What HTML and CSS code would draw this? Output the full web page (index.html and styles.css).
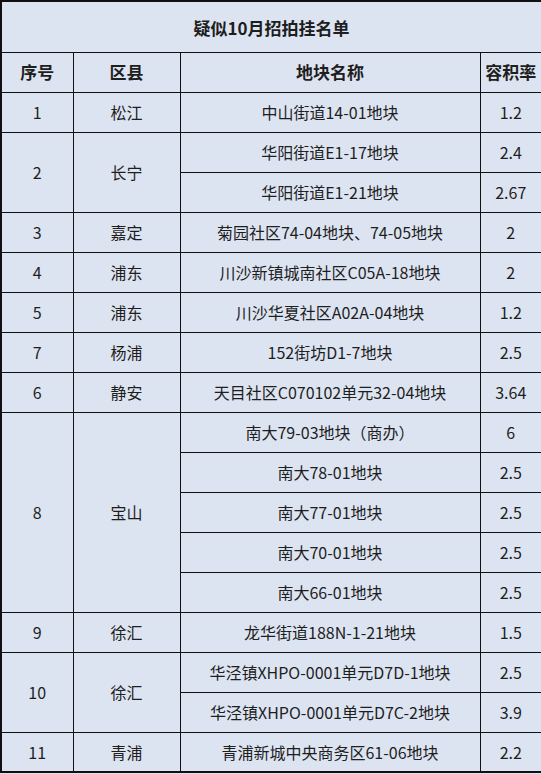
FILE: index.html
```html
<!DOCTYPE html>
<html lang="zh-CN">
<head>
<meta charset="utf-8">
<title>疑似10月招拍挂名单</title>
<link rel="stylesheet" href="styles.css">
</head>
<body>
<table class="sheet">
  <colgroup>
    <col class="c-no">
    <col class="c-area">
    <col class="c-name">
    <col class="c-far">
  </colgroup>
  <thead>
    <tr class="title-row"><th colspan="4" class="title">疑似10月招拍挂名单</th></tr>
    <tr class="head-row"><th>序号</th><th>区县</th><th>地块名称</th><th>容积率</th></tr>
  </thead>
  <tbody>
    <tr><td>1</td><td>松江</td><td>中山街道14-01地块</td><td>1.2</td></tr>
    <tr><td rowspan="2">2</td><td rowspan="2">长宁</td><td>华阳街道E1-17地块</td><td>2.4</td></tr>
    <tr><td>华阳街道E1-21地块</td><td>2.67</td></tr>
    <tr><td>3</td><td>嘉定</td><td>菊园社区74-04地块、74-05地块</td><td>2</td></tr>
    <tr><td>4</td><td>浦东</td><td>川沙新镇城南社区C05A-18地块</td><td>2</td></tr>
    <tr><td>5</td><td>浦东</td><td>川沙华夏社区A02A-04地块</td><td>1.2</td></tr>
    <tr><td>7</td><td>杨浦</td><td>152街坊D1-7地块</td><td>2.5</td></tr>
    <tr><td>6</td><td>静安</td><td>天目社区C070102单元32-04地块</td><td>3.64</td></tr>
    <tr><td rowspan="5">8</td><td rowspan="5">宝山</td><td>南大79-03地块（商办）</td><td>6</td></tr>
    <tr><td>南大78-01地块</td><td>2.5</td></tr>
    <tr><td>南大77-01地块</td><td>2.5</td></tr>
    <tr><td>南大70-01地块</td><td>2.5</td></tr>
    <tr><td>南大66-01地块</td><td>2.5</td></tr>
    <tr><td>9</td><td>徐汇</td><td>龙华街道188N-1-21地块</td><td>1.5</td></tr>
    <tr><td rowspan="2">10</td><td rowspan="2">徐汇</td><td>华泾镇XHPO-0001单元D7D-1地块</td><td>2.5</td></tr>
    <tr><td>华泾镇XHPO-0001单元D7C-2地块</td><td>3.9</td></tr>
    <tr><td>11</td><td>青浦</td><td>青浦新城中央商务区61-06地块</td><td>2.2</td></tr>
  </tbody>
</table>
</body>
</html>
```
FILE: styles.css
```css
html, body {
  margin: 0;
  padding: 0;
  background: #dde4f1;
}

.sheet {
  width: 541px;
  border-collapse: collapse;
  table-layout: fixed;
  background: #dde4f1;
  font-family: "Noto Sans CJK SC", "Noto Sans", sans-serif;
  font-size: 16px;
  color: #1e1e1e;
  border: 2px solid #111;
}

.c-no { width: 72px; }
.c-area { width: 107px; }
.c-name { width: 300px; }
.c-far { width: 62px; }

.sheet th,
.sheet td {
  border: 1px solid #111;
  text-align: center;
  vertical-align: middle;
  padding: 0;
  white-space: nowrap;
  line-height: 20px;
}

.sheet tr { height: 40px; }

.sheet .title-row { height: 51px; }

.sheet .title {
  font-size: 17px;
  font-weight: 700;
  padding-top: 2px;
}

.sheet .head-row th {
  font-size: 17px;
  font-weight: 700;
}

.sheet td {
  font-weight: 400;
}
```
